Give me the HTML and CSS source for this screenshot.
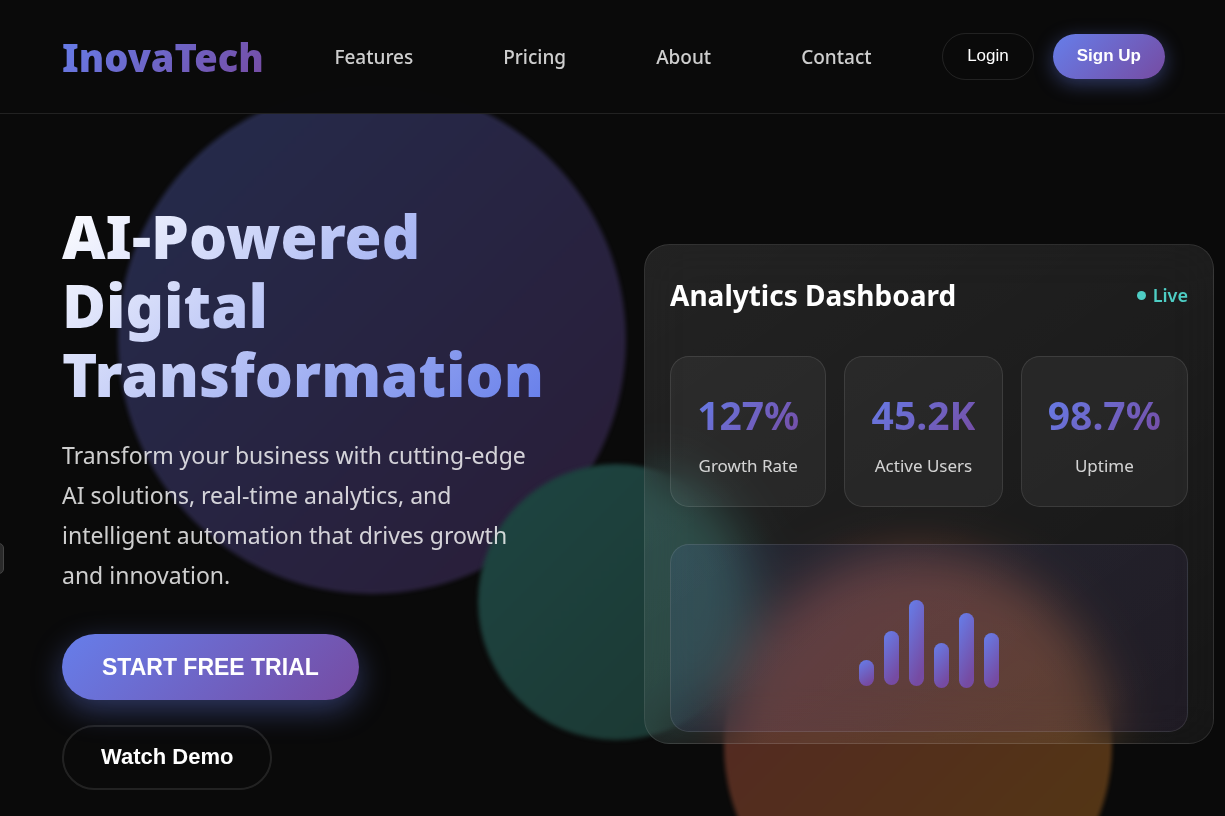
FILE: index.html
```html
<!DOCTYPE html>
<html lang="en">
<head>
    <meta charset="UTF-8">
    <meta name="viewport" content="width=device-width, initial-scale=1.0">
    <title>InovaTech</title>
    <link rel="stylesheet" href="styles.css">
</head>
<body>
    <div class="background">
        <div class="orb orb-1"></div>
        <div class="orb orb-2"></div>
        <div class="orb orb-3"></div>
    </div>

    <header class="header">
        <a href="#" class="logo">InovaTech</a>
        <nav class="nav">
            <a href="#features">Features</a>
            <a href="#pricing">Pricing</a>
            <a href="#about">About</a>
            <a href="#contact">Contact</a>
        </nav>
        <div class="auth">
            <button class="btn btn-login">Login</button>
            <button class="btn btn-signup">Sign Up</button>
        </div>
    </header>

    <main class="hero">
        <section class="hero-content">
            <h1 class="hero-title">AI-Powered Digital Transformation</h1>
            <p class="hero-text">Transform your business with cutting-edge AI solutions, real-time analytics, and intelligent automation that drives growth and innovation.</p>
            <div class="hero-buttons">
                <button class="btn btn-primary">START FREE TRIAL</button>
                <button class="btn btn-secondary">Watch Demo</button>
            </div>
        </section>

        <section class="dashboard">
            <div class="dashboard-header">
                <h2 class="dashboard-title">Analytics Dashboard</h2>
                <div class="status"><span class="status-dot"></span>Live</div>
            </div>
            <div class="stats">
                <div class="stat">
                    <div class="stat-value">127%</div>
                    <div class="stat-label">Growth Rate</div>
                </div>
                <div class="stat">
                    <div class="stat-value">45.2K</div>
                    <div class="stat-label">Active Users</div>
                </div>
                <div class="stat">
                    <div class="stat-value">98.7%</div>
                    <div class="stat-label">Uptime</div>
                </div>
            </div>
            <div class="chart">
                <svg class="chart-bars" viewBox="0 0 140 88" width="140" height="88" aria-hidden="true">
                    <defs>
                        <linearGradient id="bar" x1="0" y1="0" x2="0.4" y2="1">
                            <stop offset="0" stop-color="#667eea"/>
                            <stop offset="1" stop-color="#764ba2"/>
                        </linearGradient>
                    </defs>
                    <g fill="url(#bar)">
                        <rect x="0" y="60" width="15" height="26" rx="7.5"/>
                        <rect x="25" y="31" width="15" height="54" rx="7.5"/>
                        <rect x="50" y="0" width="15" height="86" rx="7.5"/>
                        <rect x="75" y="43" width="15" height="45" rx="7.5"/>
                        <rect x="100" y="13" width="15" height="75" rx="7.5"/>
                        <rect x="125" y="33" width="15" height="55" rx="7.5"/>
                    </g>
                </svg>
            </div>
        </section>
    </main>

    <div class="side-tab"></div>
</body>
</html>
```
FILE: styles.css
```css
* {
    margin: 0;
    padding: 0;
    box-sizing: border-box;
}

body {
    font-family: 'Noto Sans', 'Open Sans', sans-serif;
    background: #0a0a0a;
    color: #fff;
    min-height: 100vh;
    overflow: hidden;
}

/* Background */
.background {
    position: fixed;
    inset: 0;
    overflow: hidden;
    z-index: -1;
}

.orb {
    position: absolute;
    border-radius: 50%;
    filter: blur(2px);
}

.orb-1 {
    width: 508px;
    height: 508px;
    left: 118px;
    top: 86px;
    opacity: 0.3;
    background: linear-gradient(135deg, #667eea, #764ba2);
}

.orb-2 {
    width: 276px;
    height: 276px;
    left: 478px;
    top: 464px;
    background: linear-gradient(135deg, #1e4542, #1b3731);
}

.orb-3 {
    width: 388px;
    height: 388px;
    left: 724px;
    top: 552px;
    opacity: 0.3;
    background: linear-gradient(135deg, #ff6b6b, #ffa726);
}

/* Header */
.header {
    display: flex;
    justify-content: space-between;
    align-items: center;
    height: 114px;
    padding: 0 60px 0 62px;
    background: rgba(10, 10, 10, 0.98);
    border-bottom: 1px solid rgba(255, 255, 255, 0.1);
}

.logo {
    font-size: 38px;
    font-weight: 900;
    text-decoration: none;
    color: transparent;
    background: linear-gradient(135deg, #667eea, #764ba2);
    background-clip: text;
    -webkit-background-clip: text;
}

.nav {
    display: flex;
    gap: 90px;
}

.nav a {
    font-size: 19px;
    font-weight: 500;
    color: rgba(255, 255, 255, 0.8);
    text-decoration: none;
}

.auth {
    display: flex;
    align-items: center;
    gap: 19px;
}

.btn {
    font-family: 'Liberation Sans', Arial, sans-serif;
    color: #fff;
    border: none;
    cursor: pointer;
}

.btn-login,
.btn-signup {
    font-size: 17px;
    line-height: 20px;
    padding: 12px 24px 13px;
    border-radius: 25px;
}

.btn-login {
    background: transparent;
    border: 1px solid rgba(255, 255, 255, 0.1);
}

.btn-signup {
    font-weight: 600;
    background: linear-gradient(135deg, #667eea, #764ba2);
    box-shadow: 0 5px 19px rgba(102, 126, 234, 0.4);
}

/* Hero */
.hero {
    display: grid;
    grid-template-columns: 482fr 570fr;
    gap: 100px;
    align-items: start;
    padding: 88px 11px 26px 62px;
}

.hero-title {
    font-size: 60px;
    font-weight: 900;
    line-height: 69px;
    margin-bottom: 26px;
    color: transparent;
    background: linear-gradient(135deg, #fff, #667eea);
    background-clip: text;
    -webkit-background-clip: text;
}

.hero-text {
    font-size: 23px;
    line-height: 40px;
    margin-bottom: 39px;
    color: rgba(255, 255, 255, 0.8);
}

.hero-buttons {
    display: flex;
    flex-direction: column;
    align-items: flex-start;
    gap: 25px;
}

.btn-primary,
.btn-secondary {
    font-weight: 600;
    line-height: 26px;
    border-radius: 62px;
}

.btn-primary {
    font-size: 23px;
    padding: 20px 40px;
    background: linear-gradient(135deg, #667eea, #764ba2);
    box-shadow: 0 10px 31px rgba(102, 126, 234, 0.4);
}

.btn-secondary {
    font-size: 22px;
    padding: 17px 37px 18px;
    background: transparent;
    border: 2px solid rgba(255, 255, 255, 0.1);
}

/* Dashboard */
.dashboard {
    height: 500px;
    margin-top: 42px;
    padding: 25px;
    border: 1px solid rgba(255, 255, 255, 0.1);
    border-radius: 25px;
    background: linear-gradient(145deg, rgba(255, 255, 255, 0.1), rgba(255, 255, 255, 0.05));
    backdrop-filter: blur(25px);
    -webkit-backdrop-filter: blur(25px);
}

.dashboard-header {
    display: flex;
    justify-content: space-between;
    align-items: center;
    height: 50px;
    margin-bottom: 36px;
}

.dashboard-title {
    font-size: 28px;
    font-weight: 700;
}

.status {
    display: flex;
    align-items: center;
    gap: 7px;
    font-size: 18px;
    font-weight: 600;
    color: #4ecdc4;
}

.status-dot {
    width: 9px;
    height: 9px;
    border-radius: 50%;
    background: #4ecdc4;
}

.stats {
    display: grid;
    grid-template-columns: 156fr 158fr 167fr;
    gap: 18px;
    margin-bottom: 37px;
}

.stat {
    height: 151px;
    padding: 30px 0;
    text-align: center;
    border: 1px solid rgba(255, 255, 255, 0.1);
    border-radius: 19px;
    background: rgba(255, 255, 255, 0.05);
}

.stat-value {
    display: inline-block;
    font-size: 39px;
    font-weight: 700;
    line-height: 56px;
    color: transparent;
    background: linear-gradient(135deg, #667eea, #764ba2);
    background-clip: text;
    -webkit-background-clip: text;
}

.stat-label {
    margin-top: 11px;
    font-size: 17px;
    line-height: 24px;
    color: rgba(255, 255, 255, 0.8);
}

.chart {
    display: flex;
    justify-content: center;
    align-items: center;
    height: 188px;
    padding-top: 12px;
    border: 1px solid rgba(255, 255, 255, 0.1);
    border-radius: 19px;
    background: linear-gradient(135deg, rgba(102, 126, 234, 0.1), rgba(118, 75, 162, 0.1));
}

.side-tab {
    position: fixed;
    left: -6px;
    top: 543px;
    width: 10px;
    height: 31px;
    border: 1px solid #444;
    border-radius: 5px;
    background: #2a2a2a;
}
```
